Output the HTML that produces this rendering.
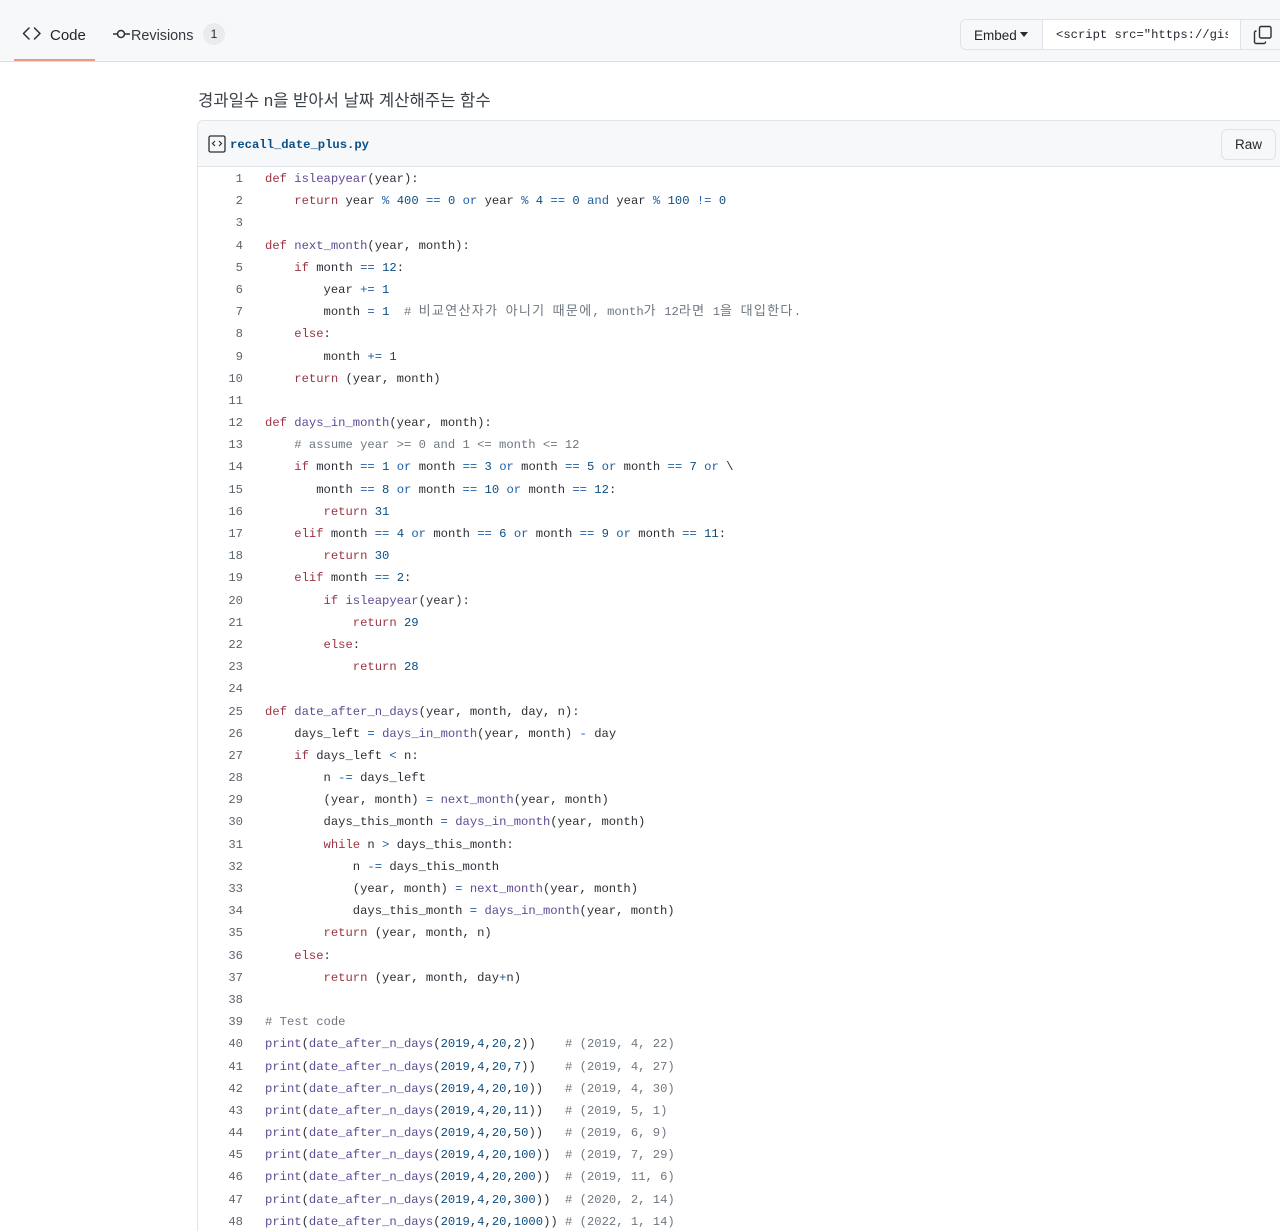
<!DOCTYPE html>
<html lang="ko"><head><meta charset="utf-8"><title>Gist</title>
<style>
html,body{margin:0;padding:0;background:#fff;width:1280px;height:1231px;overflow:hidden}
body{font-family:"Liberation Sans","Noto Sans CJK KR",sans-serif;color:#24292f}
div,pre,svg{position:absolute;margin:0}
.page{left:0;top:0;width:1280px;height:1231px;overflow:hidden}
.top{left:0;top:0;width:1280px;height:61px;background:#f6f8fa;border-bottom:1px solid #d8dee4}
.ul{left:14px;top:59px;width:81px;height:2px;background:#ee9a88}
.tab{top:25px;font-size:15px;line-height:20px}
.badge{left:203px;top:23px;width:22px;height:22px;border-radius:11px;background:#e9ecef;text-align:center;font-size:12px;line-height:22px}
.group{left:960px;top:19px;width:330px;height:29px;border:1px solid #dfe3e8;border-radius:6px;background:#f6f8fa}
.inp{left:81px;top:0;width:197px;height:29px;background:#fff;border-left:1px solid #dfe3e8;border-right:1px solid #dfe3e8;overflow:hidden}
.inp pre{left:13px;top:1px;width:172px;overflow:hidden;font:12.2px/29px "Liberation Mono",monospace;color:#24292f}
.desc{left:198px;top:91px;font-size:16.65px;line-height:20px;color:#3a4047;white-space:nowrap}
.box{left:197px;top:120px;width:1100px;height:1105px;border:1px solid #e1e4e8;border-bottom:0;background:#fff;border-radius:6px 6px 0 0;padding-bottom:20px}
.head{left:0;top:0;width:1100px;height:45px;background:#f6f8fa;border-bottom:1px solid #e1e4e8;border-radius:6px 6px 0 0}
.fn{left:230px;top:137px;font:bold 12.2px/16px "Liberation Mono",monospace;color:#0b4f8a}
.raw{left:1221px;top:129px;width:53px;height:29px;border:1px solid #dfe3e8;border-radius:6px;background:#f6f8fa;text-align:center;font-size:13.5px;line-height:30px}
pre{font:12.2px/22.19px "Liberation Mono","Noto Sans CJK KR",monospace}
.nums{left:200px;top:168px;width:43px;text-align:right;color:#5c646d}
.code{left:265px;top:168px;color:#2b3036}
b{font-weight:400}
.k{color:#9c3343}.f{color:#5f4a93}.n{color:#0d4d80}.o{color:#1d5fa5}.c{color:#6e7781}
.h{font-size:13px;letter-spacing:1.3px}
</style></head><body>
<div class="page">
<div class="top"></div><div class="ul"></div>
<svg style="left:22px;top:27px" width="20" height="16" viewBox="0 0 20 16" fill="none" stroke="#2b3036" stroke-width="1.5" stroke-linecap="round" stroke-linejoin="round"><path d="M7 1 1.500 6.500 7 12M12.500 1 18 6.500 12.500 12"/></svg>
<div class="tab" style="left:50px;top:25px;font-weight:500;color:#1f2328;margin-top:1px">Code</div>
<svg style="left:112px;top:27px" width="20" height="14" viewBox="0 0 20 14" fill="none" stroke="#2b3036" stroke-width="1.500"><circle cx="9" cy="7" r="3.500"/><path d="M1 7h4.500M12.500 7H18"/></svg>
<div class="tab" style="left:131px;color:#33393f;font-size:14.4px;margin-top:1px">Revisions</div>
<div class="badge">1</div>
<div class="group">
<div style="left:13px;top:1px;font-size:13.5px;line-height:29px;color:#1f2328">Embed</div>
<div style="left:59px;top:12px;width:0;height:0;border:4.500px solid transparent;border-top:5px solid #24292f;border-bottom:0"></div>
<div class="inp"><pre>&lt;script src="https://gist.github.com/</pre></div>
</div>
<svg style="left:1253px;top:25px" width="20" height="20" viewBox="0 0 20 20" fill="none" stroke="#2b3036" stroke-width="1.400" stroke-linejoin="round"><rect x="6.500" y="1.500" width="11.500" height="11.500" rx="1.500"/><path d="M3.500 6H3a1.500 1.500 0 0 0-1.500 1.500V17A1.500 1.500 0 0 0 3 18.500h8a1.500 1.500 0 0 0 1.500-1.500v-.500"/></svg>
<div class="desc">경과일수 n을 받아서 날짜 계산해주는 함수</div>
<div class="box"><div class="head"></div></div>
<svg style="left:208px;top:135px" width="18" height="18" viewBox="0 0 18 18" fill="none" stroke="#2b3036" stroke-width="1.300"><rect x="1" y="1" width="16" height="16" rx="1.500"/><path d="M7 6 4.500 8.500 7 11M11 6l2.500 2.500L11 11" stroke-width="1.200"/></svg>
<div class="fn">recall_date_plus.py</div>
<div class="raw">Raw</div>
<pre class="nums">1
2
3
4
5
6
7
8
9
10
11
12
13
14
15
16
17
18
19
20
21
22
23
24
25
26
27
28
29
30
31
32
33
34
35
36
37
38
39
40
41
42
43
44
45
46
47
48</pre>
<pre class="code"><b class="k">def</b> <b class="f">isleapyear</b>(year):
    <b class="k">return</b> year <b class="o">%</b> <b class="n">400</b> <b class="o">==</b> <b class="n">0</b> <b class="o">or</b> year <b class="o">%</b> <b class="n">4</b> <b class="o">==</b> <b class="n">0</b> <b class="o">and</b> year <b class="o">%</b> <b class="n">100</b> <b class="o">!=</b> <b class="n">0</b>

<b class="k">def</b> <b class="f">next_month</b>(year, month):
    <b class="k">if</b> month <b class="o">==</b> <b class="n">12</b>:
        year <b class="o">+=</b> <b class="n">1</b>
        month <b class="o">=</b> <b class="n">1</b>  <b class="c"># <b class="h">비교연산자가</b> <b class="h">아니기</b> <b class="h">때문에</b>, month<b class="h">가</b> 12<b class="h">라면</b> 1<b class="h">을</b> <b class="h">대입한다</b>.</b>
    <b class="k">else</b>:
        month <b class="o">+=</b> <b class="n">1</b>
    <b class="k">return</b> (year, month)

<b class="k">def</b> <b class="f">days_in_month</b>(year, month):
    <b class="c"># assume year &gt;= 0 and 1 &lt;= month &lt;= 12</b>
    <b class="k">if</b> month <b class="o">==</b> <b class="n">1</b> <b class="o">or</b> month <b class="o">==</b> <b class="n">3</b> <b class="o">or</b> month <b class="o">==</b> <b class="n">5</b> <b class="o">or</b> month <b class="o">==</b> <b class="n">7</b> <b class="o">or</b> \
       month <b class="o">==</b> <b class="n">8</b> <b class="o">or</b> month <b class="o">==</b> <b class="n">10</b> <b class="o">or</b> month <b class="o">==</b> <b class="n">12</b>:
        <b class="k">return</b> <b class="n">31</b>
    <b class="k">elif</b> month <b class="o">==</b> <b class="n">4</b> <b class="o">or</b> month <b class="o">==</b> <b class="n">6</b> <b class="o">or</b> month <b class="o">==</b> <b class="n">9</b> <b class="o">or</b> month <b class="o">==</b> <b class="n">11</b>:
        <b class="k">return</b> <b class="n">30</b>
    <b class="k">elif</b> month <b class="o">==</b> <b class="n">2</b>:
        <b class="k">if</b> <b class="f">isleapyear</b>(year):
            <b class="k">return</b> <b class="n">29</b>
        <b class="k">else</b>:
            <b class="k">return</b> <b class="n">28</b>

<b class="k">def</b> <b class="f">date_after_n_days</b>(year, month, day, n):
    days_left <b class="o">=</b> <b class="f">days_in_month</b>(year, month) <b class="o">-</b> day
    <b class="k">if</b> days_left <b class="o">&lt;</b> n:
        n <b class="o">-=</b> days_left
        (year, month) <b class="o">=</b> <b class="f">next_month</b>(year, month)
        days_this_month <b class="o">=</b> <b class="f">days_in_month</b>(year, month)
        <b class="k">while</b> n <b class="o">&gt;</b> days_this_month:
            n <b class="o">-=</b> days_this_month
            (year, month) <b class="o">=</b> <b class="f">next_month</b>(year, month)
            days_this_month <b class="o">=</b> <b class="f">days_in_month</b>(year, month)
        <b class="k">return</b> (year, month, n)
    <b class="k">else</b>:
        <b class="k">return</b> (year, month, day<b class="o">+</b>n)

<b class="c"># Test code</b>
<b class="f">print</b>(<b class="f">date_after_n_days</b>(<b class="n">2019</b>,<b class="n">4</b>,<b class="n">20</b>,<b class="n">2</b>))    <b class="c"># (2019, 4, 22)</b>
<b class="f">print</b>(<b class="f">date_after_n_days</b>(<b class="n">2019</b>,<b class="n">4</b>,<b class="n">20</b>,<b class="n">7</b>))    <b class="c"># (2019, 4, 27)</b>
<b class="f">print</b>(<b class="f">date_after_n_days</b>(<b class="n">2019</b>,<b class="n">4</b>,<b class="n">20</b>,<b class="n">10</b>))   <b class="c"># (2019, 4, 30)</b>
<b class="f">print</b>(<b class="f">date_after_n_days</b>(<b class="n">2019</b>,<b class="n">4</b>,<b class="n">20</b>,<b class="n">11</b>))   <b class="c"># (2019, 5, 1)</b>
<b class="f">print</b>(<b class="f">date_after_n_days</b>(<b class="n">2019</b>,<b class="n">4</b>,<b class="n">20</b>,<b class="n">50</b>))   <b class="c"># (2019, 6, 9)</b>
<b class="f">print</b>(<b class="f">date_after_n_days</b>(<b class="n">2019</b>,<b class="n">4</b>,<b class="n">20</b>,<b class="n">100</b>))  <b class="c"># (2019, 7, 29)</b>
<b class="f">print</b>(<b class="f">date_after_n_days</b>(<b class="n">2019</b>,<b class="n">4</b>,<b class="n">20</b>,<b class="n">200</b>))  <b class="c"># (2019, 11, 6)</b>
<b class="f">print</b>(<b class="f">date_after_n_days</b>(<b class="n">2019</b>,<b class="n">4</b>,<b class="n">20</b>,<b class="n">300</b>))  <b class="c"># (2020, 2, 14)</b>
<b class="f">print</b>(<b class="f">date_after_n_days</b>(<b class="n">2019</b>,<b class="n">4</b>,<b class="n">20</b>,<b class="n">1000</b>)) <b class="c"># (2022, 1, 14)</b></pre>
</div>
</body></html>
